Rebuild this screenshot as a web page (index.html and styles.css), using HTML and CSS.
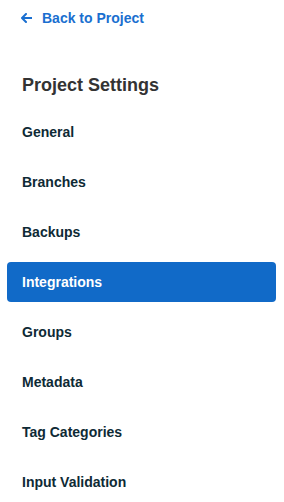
FILE: index.html
```html
<!DOCTYPE html>
<html>
<head>
<meta charset="utf-8">
<link rel="stylesheet" href="styles.css">
</head>
<body>
<nav class="sidebar">
  <a class="back" href="#">
    <svg class="back-icon" width="11" height="10" viewBox="0 0 11 10"><path d="M5 1 L1 5 L5 9 M1.5 5 H10.5" fill="none" stroke="currentColor" stroke-width="2" stroke-linecap="round" stroke-linejoin="round"/></svg>
    <span>Back to Project</span>
  </a>
  <h2 class="title">Project Settings</h2>
  <ul class="menu">
    <li class="item">General</li>
    <li class="item">Branches</li>
    <li class="item">Backups</li>
    <li class="item active">Integrations</li>
    <li class="item">Groups</li>
    <li class="item">Metadata</li>
    <li class="item">Tag Categories</li>
    <li class="item">Input Validation</li>
  </ul>
</nav>
</body>
</html>
```
FILE: styles.css
```css
html, body {
  margin: 0;
  padding: 0;
  background: #fff;
}
body {
  font-family: "Liberation Sans", Arial, sans-serif;
}
.sidebar {
  padding: 8px 8px 0 7px;
  display: flex;
  flex-direction: column;
}
.back {
  display: flex;
  align-items: center;
  gap: 10px;
  padding-left: 14px;
  height: 20px;
  color: #1a6fd0;
  font-size: 14px;
  font-weight: bold;
  text-decoration: none;
}
.back-icon {
  display: block;
}
.title {
  margin: 47px 0 0 15px;
  font-size: 18px;
  line-height: 20px;
  font-weight: bold;
  color: #333;
}
.menu {
  list-style: none;
  margin: 17px 0 0 0;
  padding: 0;
  display: flex;
  flex-direction: column;
  gap: 10px;
}
.item {
  height: 40px;
  line-height: 40px;
  padding-left: 15px;
  font-size: 14px;
  font-weight: bold;
  color: #0e2a35;
  border-radius: 4px;
}
.item.active {
  background: #116ac8;
  color: #fff;
}
```
